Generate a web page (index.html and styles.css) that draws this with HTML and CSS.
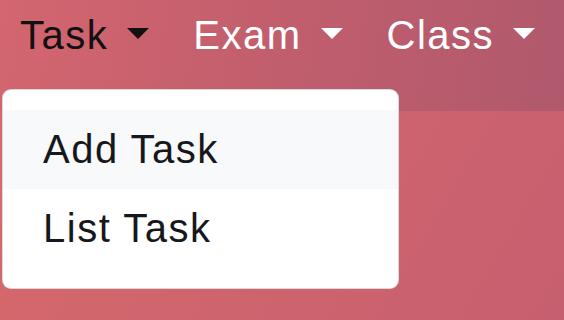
FILE: index.html
```html
<!DOCTYPE html>
<html lang="en">
<head>
    <meta charset="UTF-8">
    <meta name="viewport" content="width=device-width, initial-scale=1.0">
    <title>Task Menu</title>
    <link rel="stylesheet" href="styles.css">
</head>
<body>
    <nav class="navbar">
        <ul class="nav-list">
            <li class="nav-item">
                <a href="#" class="nav-link active dropdown-toggle">Task</a>
                <div class="dropdown-menu">
                    <a href="#" class="dropdown-item hover">Add Task</a>
                    <a href="#" class="dropdown-item">List Task</a>
                </div>
            </li>
            <li class="nav-item">
                <a href="#" class="nav-link dropdown-toggle">Exam</a>
            </li>
            <li class="nav-item">
                <a href="#" class="nav-link dropdown-toggle">Class</a>
            </li>
        </ul>
    </nav>
    <main class="page"></main>
</body>
</html>
```

FILE: styles.css
```css
html, body {
    margin: 0;
    height: 100%;
}

body {
    font-family: "Liberation Sans", Arial, sans-serif;
    font-size: 40px;
    background: linear-gradient(120deg, #d86a6c 0%, #c65f6f 100%);
    overflow: hidden;
}

.navbar {
    height: 111px;
    background: linear-gradient(100deg, #d3666f 0%, #c15e6d 50%, #b0596d 100%);
}

.nav-list {
    display: flex;
    margin: 0;
    padding: 0;
    list-style: none;
}

.nav-item {
    position: relative;
}

.nav-link {
    display: block;
    padding: 5px 24px 0 20px;
    line-height: 60px;
    color: #fff;
    text-decoration: none;
    letter-spacing: 1.5px;
}

.nav-link.active {
    color: #111;
}

.dropdown-toggle::after {
    content: "";
    display: inline-block;
    margin-left: 19px;
    vertical-align: 10px;
    border-top: 11px solid;
    border-left: 11px solid transparent;
    border-right: 11px solid transparent;
}

.dropdown-menu {
    position: absolute;
    top: 89px;
    left: 2px;
    box-sizing: border-box;
    width: 397px;
    padding: 20px 0;
    background-color: #fff;
    border: 1px solid rgba(0, 0, 0, 0.15);
    border-radius: 9px;
}

.dropdown-item {
    display: block;
    padding: 10px 40px;
    line-height: 59px;
    color: #16181b;
    text-decoration: none;
    letter-spacing: 1.5px;
}

.dropdown-item.hover {
    background-color: #f8f9fa;
}
```
